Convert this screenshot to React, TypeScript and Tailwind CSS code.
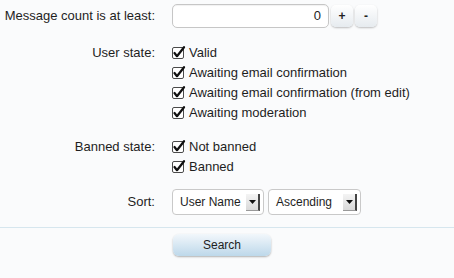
import React from "react";

const userStates = [
  "Valid",
  "Awaiting email confirmation",
  "Awaiting email confirmation (from edit)",
  "Awaiting moderation",
];

const bannedStates = ["Not banned", "Banned"];

function CheckMark() {
  return (
    <svg width="14" height="14" viewBox="0 0 14 14" className="shrink-0">
      <rect x="0.5" y="1.5" width="11" height="11" rx="1.5" fill="#fff" stroke="#4a4a4a" />
      <path
        d="M2.5 7 L5 10.2 L12 1.2"
        fill="none"
        stroke="#111"
        strokeWidth="2.2"
        strokeLinecap="round"
        strokeLinejoin="round"
      />
    </svg>
  );
}

function CheckRow({ label }: { label: string }) {
  return (
    <label className="flex h-[20px] items-center gap-[3px]">
      <CheckMark />
      <span>{label}</span>
    </label>
  );
}

function FakeSelect({ value, width }: { value: string; width: string }) {
  return (
    <div
      className={`flex h-[26px] ${width} items-center justify-between rounded-[4px] border border-[#c9c9c9] bg-white pl-[7px] pr-[3px] text-[12px]`}
    >
      <span>{value}</span>
      <span className="flex h-[17px] w-[14px] items-center justify-center border-r-2 border-b border-r-[#444] border-b-[#999] bg-gradient-to-b from-[#f4f4f4] to-[#d9d9d9]">
        <svg width="7" height="4" viewBox="0 0 7 4">
          <path d="M0 0 H7 L3.5 4 Z" fill="#111" />
        </svg>
      </span>
    </div>
  );
}

function SpinButton({ children }: { children: React.ReactNode }) {
  return (
    <button className="flex h-[22px] w-[22px] items-center justify-center rounded-[5px] bg-gradient-to-b from-white to-[#e6ebef] text-[12px] font-bold text-[#222] shadow-[0_1px_2px_rgba(0,0,0,0.25)]">
      {children}
    </button>
  );
}

export default function App() {
  return (
    <div className="h-[278px] w-[454px] bg-[#fafbfc] pt-[4px] text-[13px] text-[#1e1e1e] [font-family:'Liberation_Sans',Arial,sans-serif]">
      <div className="flex h-[24px] items-center">
        <div className="w-[155px] text-right">Message count is at least:</div>
        <div className="ml-[17px] flex items-center gap-[2px]">
          <div className="flex h-[24px] w-[157px] items-center justify-end rounded-[5px] border border-[#c6c6c6] bg-white pr-[7px] shadow-[inset_0_1px_1px_rgba(0,0,0,0.06)]">
            0
          </div>
          <SpinButton>+</SpinButton>
          <SpinButton>-</SpinButton>
        </div>
      </div>

      <div className="mt-[15px] flex">
        <div className="h-[20px] w-[155px] text-right leading-[20px]">User state:</div>
        <div className="ml-[17px] flex flex-col">
          {userStates.map((s) => (
            <CheckRow key={s} label={s} />
          ))}
        </div>
      </div>

      <div className="mt-[14px] flex">
        <div className="h-[20px] w-[155px] text-right leading-[20px]">Banned state:</div>
        <div className="ml-[17px] flex flex-col">
          {bannedStates.map((s) => (
            <CheckRow key={s} label={s} />
          ))}
        </div>
      </div>

      <div className="mt-[12px] flex items-center">
        <div className="w-[155px] text-right">Sort:</div>
        <div className="ml-[17px] flex gap-[4px]">
          <FakeSelect value="User Name" width="w-[92px]" />
          <FakeSelect value="Ascending" width="w-[93px]" />
        </div>
      </div>

      <div className="mt-[12px] h-px bg-[#d6e6ee]" />

      <div className="pl-[173px] pt-[6px]">
        <button className="h-[22px] w-[98px] rounded-[6px] bg-gradient-to-b from-[#f2f7fb] to-[#bdd8ea] text-[12px] text-[#222] shadow-[0_1px_2px_rgba(0,0,0,0.3)]">
          Search
        </button>
      </div>
    </div>
  );
}
